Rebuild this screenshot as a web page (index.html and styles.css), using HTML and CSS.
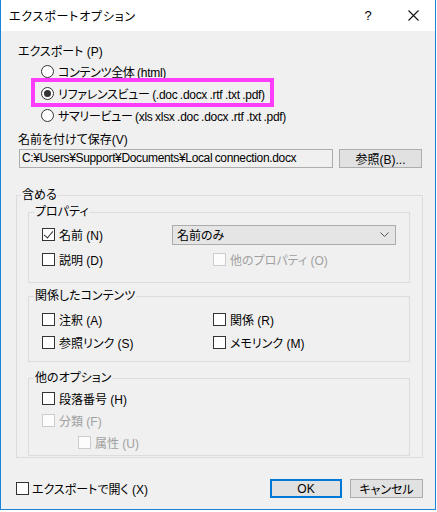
FILE: index.html
```html
<!DOCTYPE html>
<html lang="ja">
<head>
    <meta charset="UTF-8">
    <meta name="viewport" content="width=device-width, initial-scale=1.0">
    <title>エクスポートオプション</title>
    <link rel="stylesheet" href="styles.css">
</head>
<body>
    <div class="dialog">
        <div class="titlebar">
            <div class="title">エクスポートオプション</div>
            <div class="help">?</div>
            <div class="close">
                <svg width="11" height="11" viewBox="0 0 11 11"><path d="M0.5 0.5L10.5 10.5M10.5 0.5L0.5 10.5" stroke="#111" stroke-width="1.1" fill="none"/></svg>
            </div>
        </div>

        <div class="content">
            <div class="label">エクスポート (P)</div>
            <div class="radio-list">
                <div class="radio-row"><span class="radio"></span>コンテンツ全体 (html)</div>
                <div class="radio-row"><span class="radio checked"></span>リファレンスビュー (.doc .docx .rtf .txt .pdf)<span class="marker"></span></div>
                <div class="radio-row"><span class="radio"></span>サマリービュー (xls xlsx .doc .docx .rtf .txt .pdf)</div>
            </div>

            <div class="label save-label">名前を付けて保存(V)</div>
            <div class="path-row">
                <div class="textbox">C:¥Users¥Support¥Documents¥Local connection.docx</div>
                <button class="btn browse">参照(B)...</button>
            </div>

            <fieldset class="group outer">
                <legend>含める</legend>

                <fieldset class="group inner props">
                    <legend>プロパティ</legend>
                    <div class="prop-row">
                        <div class="check name-check"><span class="box checked"></span>名前 (N)</div>
                        <div class="select">
                            <span>名前のみ</span>
                            <svg width="9" height="5" viewBox="0 0 9 5"><path d="M0.5 0.5L4.5 4.5L8.5 0.5" stroke="#555" fill="none"/></svg>
                        </div>
                    </div>
                    <div class="prop-row">
                        <div class="check desc-check"><span class="box"></span>説明 (D)</div>
                        <div class="check disabled"><span class="box"></span>他のプロパティ (O)</div>
                    </div>
                </fieldset>

                <fieldset class="group inner related">
                    <legend>関係したコンテンツ</legend>
                    <div class="check-grid">
                        <div class="check"><span class="box"></span>注釈 (A)</div>
                        <div class="check"><span class="box"></span>関係 (R)</div>
                        <div class="check"><span class="box"></span>参照リンク (S)</div>
                        <div class="check"><span class="box"></span>メモリンク (M)</div>
                    </div>
                </fieldset>

                <fieldset class="group inner others">
                    <legend>他のオプション</legend>
                    <div class="check"><span class="box"></span>段落番号 (H)</div>
                    <div class="check disabled"><span class="box"></span>分類 (F)</div>
                    <div class="check disabled sub"><span class="box"></span>属性 (U)</div>
                </fieldset>
            </fieldset>

            <div class="footer">
                <div class="check open-check"><span class="box"></span>エクスポートで開く (X)</div>
                <button class="btn ok">OK</button>
                <button class="btn">キャンセル</button>
            </div>
        </div>
    </div>
</body>
</html>
```

FILE: styles.css
```css
* {
    box-sizing: border-box;
}

body {
    margin: 0;
    background-color: #fff;
    font-family: "Liberation Sans", "Noto Sans CJK JP", sans-serif;
    font-size: 12px;
    font-feature-settings: "palt";
    color: #000;
}

.dialog {
    width: 436px;
    height: 510px;
    border: 1px solid #1883d7;
    border-top: none;
    background-color: #f0f0f0;
    display: flex;
    flex-direction: column;
}

.titlebar {
    height: 31px;
    background-color: #fff;
    display: flex;
    align-items: center;
    padding-left: 8px;
}

.title {
    flex: 1;
    letter-spacing: 0.8px;
}

.help {
    width: 46px;
    text-align: center;
    font-size: 13px;
}

.close {
    width: 44px;
    display: flex;
    justify-content: center;
}

.content {
    padding: 13px 12px 0 15px;
}

.label {
    line-height: 16px;
    padding-left: 2px;
}

/* ラジオボタン */
.radio-row {
    position: relative;
    height: 22px;
    display: flex;
    align-items: center;
    gap: 3px;
    padding-left: 25px;
    white-space: pre;
    letter-spacing: -0.3px;
    word-spacing: -0.5px;
}

.radio {
    width: 13px;
    height: 13px;
    margin-right: 1px;
    border: 1px solid #333;
    border-radius: 50%;
    background-color: #fff;
    display: flex;
    align-items: center;
    justify-content: center;
}

.radio.checked::after {
    content: "";
    width: 7px;
    height: 7px;
    border-radius: 50%;
    background-color: #333;
}

.marker {
    position: absolute;
    left: 15px;
    top: -4px;
    width: 243px;
    height: 29px;
    border: 4px solid #ff3dff;
}

.save-label {
    margin-top: 6px;
}

.path-row {
    margin-top: 1px;
    display: flex;
    gap: 6px;
    height: 19px;
}

.textbox {
    margin-left: 3px;
    width: 314px;
    border: 1px solid #adadad;
    background-color: #f0f0f0;
    padding-left: 2px;
    line-height: 17px;
    white-space: nowrap;
    overflow: hidden;
    letter-spacing: -0.35px;
    word-spacing: -0.5px;
}

.btn {
    font-family: inherit;
    font-size: 12px;
    font-feature-settings: "palt";
    color: #000;
    background-color: #e1e1e1;
    border: 1px solid #adadad;
    padding: 0;
    height: 19px;
}

.browse {
    width: 83px;
}

/* グループ */
.group {
    margin: 0;
    min-width: 0;
    border: 1px solid #dcdcdc;
}

.group legend {
    padding: 0 1px;
    line-height: 16px;
}

.outer {
    margin-top: 19px;
    padding: 1px 12px 1px 4px;
}

.inner {
    margin-left: 7px;
    padding: 0 5px;
}

.props {
    padding-top: 2px;
    padding-bottom: 10px;
}

.related {
    margin-top: 5px;
    padding-top: 4px;
    padding-bottom: 7px;
}

.others {
    margin-top: 8px;
    padding-top: 1px;
    padding-bottom: 2px;
}

.prop-row {
    height: 25px;
    display: flex;
    align-items: center;
    padding: 0 8px;
}

.name-check {
    width: 130px;
}

.desc-check {
    width: 171px;
}

.select {
    flex: 1;
    height: 20px;
    border: 1px solid #acacac;
    background-color: #e5e5e5;
    display: flex;
    align-items: center;
    justify-content: space-between;
    padding: 0 6px 0 4px;
}

.check-grid {
    display: grid;
    grid-template-columns: 171px 1fr;
    grid-auto-rows: 23px;
    padding: 0 8px;
}

.check {
    display: flex;
    align-items: center;
    gap: 4px;
    white-space: pre;
}

.others .check {
    height: 22px;
    padding-left: 8px;
}

.others .sub {
    padding-left: 44px;
}

.box {
    width: 13px;
    height: 13px;
    border: 1px solid #333;
    background-color: #fff;
    position: relative;
}

.box.checked::after {
    content: "";
    position: absolute;
    left: 3px;
    top: 0px;
    width: 4px;
    height: 8px;
    border-right: 1px solid #333;
    border-bottom: 1px solid #333;
    transform: rotate(40deg);
}

.disabled {
    color: #a0a0a0;
}

.disabled .box {
    border-color: #cccccc;
    background-color: #fcfcfc;
}

/* 下部 */
.footer {
    margin-top: 20px;
    height: 21px;
    display: flex;
    align-items: center;
    gap: 8px;
}

.open-check {
    flex: 1;
    gap: 3px;
}

.footer .btn {
    width: 73px;
}

.footer .ok {
    width: 72px;
    border: 2px solid #0078d7;
}
```
